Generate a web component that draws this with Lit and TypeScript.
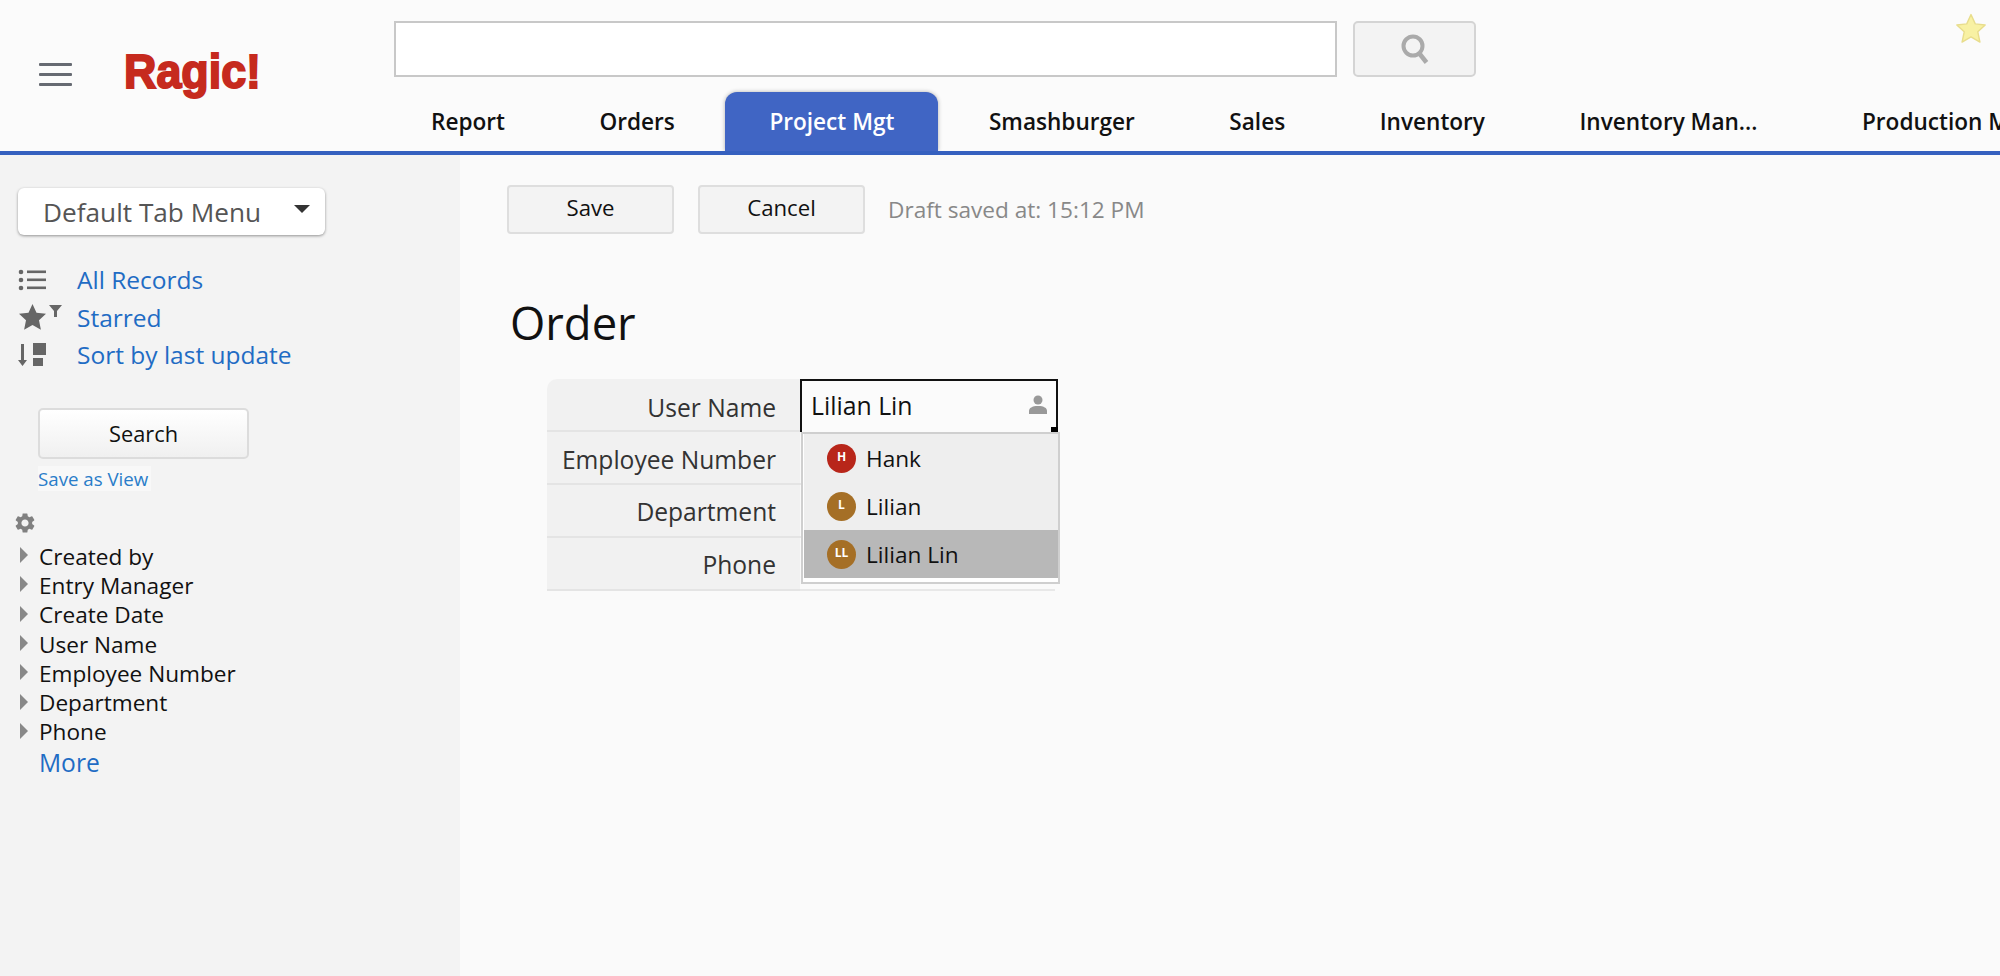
import { LitElement, html, css } from "lit";
import { customElement } from "lit/decorators.js";

const TABS = ["Report", "Orders", "Project Mgt", "Smashburger", "Sales", "Inventory", "Inventory Man...", "Production Mgt"];
const FIELDS = ["Created by", "Entry Manager", "Create Date", "User Name", "Employee Number", "Department", "Phone"];
const LABELS = ["User Name", "Employee Number", "Department", "Phone"];
const PEOPLE = [
  { n: "Hank", i: "H", c: "#b8261a", sel: false },
  { n: "Lilian", i: "L", c: "#a56f26", sel: false },
  { n: "Lilian Lin", i: "LL", c: "#a56f26", sel: true },
];

@customElement("app-root")
export class AppRoot extends LitElement {
  static styles = css`
    :host { display: block; width: 2000px; height: 976px; overflow: hidden; font-family: "Open Sans", "Noto Sans", sans-serif; color: #111; background: #fafafa; }
    .header { display: flex; height: 155px; box-sizing: border-box; background: #fbfbfb; border-bottom: 4px solid #3560bf; }
    .brand { width: 394px; flex: none; display: flex; align-items: flex-start; padding: 0 0 0 39px; box-sizing: border-box; }
    .burger { width: 33px; margin-top: 63px; display: flex; flex-direction: column; gap: 7px; }
    .burger i { display: block; height: 3px; background: #666a72; border-radius: 1px; }
    .logo { margin: 38px 0 0 52px; font: bold 49px/66px "Liberation Sans", Arial, sans-serif; color: #c62a1e; -webkit-text-stroke: 2px #c62a1e; transform: scaleX(0.915); transform-origin: left center; white-space: nowrap; }
    .right { flex: 1; min-width: 0; overflow: hidden; padding-top: 21px; }
    .search { display: flex; align-items: flex-start; height: 56px; }
    .search .input { width: 943px; height: 56px; box-sizing: border-box; background: #fff; border: 2px solid #c8c8c8; flex: none; }
    .search .btn { width: 123px; height: 56px; box-sizing: border-box; margin-left: 16px; background: #f3f3f3; border: 2px solid #d4d4d4; border-radius: 5px; display: flex; align-items: center; justify-content: center; flex: none; }
    .star { margin: -9px 12px 0 auto; flex: none; display: block; }
    .tabs { display: flex; gap: 6.5px; margin: 15px 0 0 -7px; height: 59px; }
    .tab { flex: none; padding: 0 44px; font-size: 22.6px; font-weight: 600; line-height: 60px; white-space: nowrap; color: #111; }
    .tab:nth-child(7) { padding-right: 54px; }
    .tab.on { background: #4065c4; color: #fff; border-radius: 12px 12px 0 0; box-shadow: 0 0 4px rgba(0,0,0,.3); }
    .body { display: flex; height: 821px; }
    .side { width: 460px; flex: none; background: #f3f3f3; box-sizing: border-box; padding: 33px 0 0 18px; color: #111; }
    .menu { width: 307px; height: 47px; box-sizing: border-box; background: #fff; border-radius: 6px; box-shadow: 0 1px 3px rgba(0,0,0,.4); display: flex; align-items: center; padding: 0 15px 0 25px; font-size: 26.2px; color: #555; }
    .menu b { margin-left: auto; width: 0; height: 0; border-left: 8px solid transparent; border-right: 8px solid transparent; border-top: 8px solid #333; transform: translateY(-3px); }
    .views { margin-top: 26px; }
    .view { display: flex; align-items: center; height: 37.5px; font-size: 24.5px; color: #1f6cc4; }
    .view .ic { width: 59px; flex: none; display: flex; }
    .searchbtn { margin: 34px 0 0 20px; width: 211px; height: 51px; box-sizing: border-box; border: 2px solid #dcdcdc; border-radius: 5px; background: linear-gradient(#fff, #f0f0f0); text-align: center; font-size: 21.8px; line-height: 47px; color: #111; }
    .saveview { margin: 7px 0 0 20px; width: 113px; height: 25px; line-height: 25px; background: #f8f8f8; font-size: 18.7px; color: #2a7dc9; white-space: nowrap; box-sizing: border-box; }
    .gear { display: block; margin: 20px 0 0 -5px; }
    .tree { margin-top: 7px; }
    .node { display: flex; align-items: center; height: 29.3px; font-size: 22.6px; color: #111; padding-left: 2px; }
    .node i { width: 0; height: 0; flex: none; margin-right: 11px; border-top: 8px solid transparent; border-bottom: 8px solid transparent; border-left: 8px solid #888; transform: translateY(-1px); }
    .more { height: 31px; line-height: 31px; font-size: 24.6px; color: #1f6cc4; padding-left: 21px; }
    .main { flex: 1; padding: 30px 0 0 47px; }
    .tools { display: flex; align-items: center; }
    .tbtn { width: 167px; height: 49px; box-sizing: border-box; border: 2px solid #dedede; border-radius: 4px; background: #f3f3f3; text-align: center; font-size: 22.2px; line-height: 42px; color: #111; margin-right: 24px; }
    .draft { font-size: 22.6px; color: #888; margin-left: -1px; }
    h1 { margin: 58px 0 0 3px; font-weight: 400; font-size: 45.4px; line-height: 60px; color: #111; }
    .form { position: relative; margin: 27px 0 0 40px; width: 511px; display: grid; grid-template-columns: 253px 258px; }
    .lab { height: 53px; box-sizing: border-box; background: #f1f1f1; border-bottom: 2px solid #e4e4e4; text-align: right; padding-right: 24px; font-size: 24.6px; line-height: 55px; color: #333; }
    .lab.first { border-top-left-radius: 10px; line-height: 58px; }
    .lab.low { line-height: 53px; }
    .val { height: 53px; box-sizing: border-box; border-bottom: 2px solid #e8e8e8; margin-right: 3px; }
    .val.active { background: #fbfbfb; border: 2px solid #111; border-bottom: 0; margin-right: 0; display: flex; align-items: center; justify-content: space-between; padding: 0 9px 3px 9px; font-size: 24.8px; color: #111; position: relative; }
    .handle { position: absolute; right: -2px; bottom: 0; width: 7px; height: 5px; background: #000; }
    .pop { position: absolute; left: 254px; top: 53px; width: 259px; height: 152px; box-sizing: border-box; border: 2px solid #cfcfcf; background: #fff; padding-bottom: 5px; }
    .opt { height: 48px; display: flex; align-items: center; background: #eee; padding-left: 23px; font-size: 22.6px; color: #111; margin-left: 1px; }
    .opt.sel { background: #b8b8b8; }
    .av { width: 29px; height: 29px; border-radius: 50%; margin-right: 10px; color: #fff; font-size: 12px; font-weight: 700; text-align: center; line-height: 25px; flex: none; }
  `;

  render() {
    return html`
      <div class="header">
        <div class="brand">
          <div class="burger"><i></i><i></i><i></i></div>
          <div class="logo">Ragic!</div>
        </div>
        <div class="right">
          <div class="search">
            <div class="input"></div>
            <div class="btn">
              <svg width="30" height="30" viewBox="0 0 30 30" fill="none" stroke="#aaa"><circle cx="13" cy="12" r="9.5" stroke-width="4"/><path d="M19 19l7.5 9.5" stroke-width="4.5"/></svg>
            </div>
            <svg class="star" width="34" height="34" viewBox="0 0 24 24"><path d="M12 1.8l3 6.6 7 .8-5.2 4.8 1.5 7.2L12 17.6 5.7 21.2l1.5-7.2L2 9.2l7-.8z" fill="#f8f1a3" stroke="#e8dd8c" stroke-width="1" stroke-linejoin="round"/></svg>
          </div>
          <div class="tabs">
            ${TABS.map((t) => html`<div class="tab ${t === "Project Mgt" ? "on" : ""}">${t}</div>`)}
          </div>
        </div>
      </div>
      <div class="body">
        <div class="side">
          <div class="menu">Default Tab Menu<b></b></div>
          <div class="views">
            <div class="view"><span class="ic"><svg width="29" height="22" viewBox="0 0 29 22" fill="#666"><circle cx="3" cy="3" r="2.3"/><circle cx="3" cy="11" r="2.3"/><circle cx="3" cy="19" r="2.3"/><rect x="9" y="1.5" width="19" height="2.6"/><rect x="9" y="9.5" width="19" height="2.6"/><rect x="9" y="17.5" width="19" height="2.6"/></svg></span>All Records</div>
            <div class="view"><span class="ic"><svg width="46" height="28" viewBox="0 0 46 28" fill="#666"><path d="M14.5 1l4 8.7 9.5 1.100-7 6.500 1.900 9.400-8.400-4.700-8.400 4.700L8 17.300l-7-6.500 9.500-1.100z"/><path d="M31 2h13l-5 6v6h-3V8z"/></svg></span>Starred</div>
            <div class="view"><span class="ic"><svg width="29" height="24" viewBox="0 0 29 24" fill="#666"><path d="M3 1h3v16h3l-4.500 6L0 17h3z"/><rect x="15" y="0" width="13" height="12"/><rect x="15" y="15" width="10" height="8"/></svg></span>Sort by last update</div>
          </div>
          <div class="searchbtn">Search</div>
          <div class="saveview">Save as View</div>
          <svg class="gear" width="24" height="24" viewBox="0 0 24 24" fill="#808080"><path d="M19.140 12.940c.04-.3.06-.61.06-.94 0-.32-.02-.64-.07-.94l2.030-1.580a.49.49 0 0 0 .12-.61l-1.920-3.320a.488.488 0 0 0-.59-.22l-2.390.96c-.5-.38-1.030-.7-1.620-.94l-.36-2.540a.484.484 0 0 0-.48-.41h-3.840c-.24 0-.43.17-.47.41l-.36 2.540c-.59.24-1.130.57-1.620.94l-2.390-.96c-.22-.08-.47 0-.59.22L2.740 8.870c-.12.21-.08.47.12.61l2.030 1.580c-.05.3-.09.63-.09.94s.02.64.07.94l-2.030 1.580a.49.49 0 0 0-.12.61l1.920 3.320c.12.22.37.29.59.22l2.390-.96c.5.38 1.030.7 1.620.94l.36 2.540c.05.24.24.41.48.41h3.840c.24 0 .44-.17.47-.41l.36-2.540c.59-.24 1.130-.56 1.620-.94l2.390.96c.22.08.47 0 .59-.22l1.920-3.320c.12-.22.07-.47-.12-.61l-2.010-1.580zM12 15.600c-1.980 0-3.600-1.620-3.600-3.600s1.620-3.600 3.600-3.600 3.600 1.620 3.600 3.600-1.620 3.600-3.600 3.600z"/></svg>
          <div class="tree">
            ${FIELDS.map((f) => html`<div class="node"><i></i>${f}</div>`)}
            <div class="more">More</div>
          </div>
        </div>
        <div class="main">
          <div class="tools">
            <div class="tbtn">Save</div>
            <div class="tbtn">Cancel</div>
            <div class="draft">Draft saved at: 15:12 PM</div>
          </div>
          <h1>Order</h1>
          <div class="form">
            ${LABELS.map((l, i) => html`
              <div class="lab ${i === 0 ? "first" : i > 1 ? "low" : ""}">${l}</div>
              ${i === 0
                ? html`<div class="val active">Lilian Lin
                    <svg width="18" height="20" viewBox="0 0 18 20" fill="#999"><circle cx="9" cy="5" r="4.5"/><path d="M0 19v-3c0-3 3-5 9-5s9 2 9 5v3z"/></svg>
                    <span class="handle"></span></div>`
                : html`<div class="val"></div>`}
            `)}
            <div class="pop">
              ${PEOPLE.map((p) => html`<div class="opt ${p.sel ? "sel" : ""}"><span class="av" style="background:${p.c}">${p.i}</span>${p.n}</div>`)}
            </div>
          </div>
        </div>
      </div>
    `;
  }
}
